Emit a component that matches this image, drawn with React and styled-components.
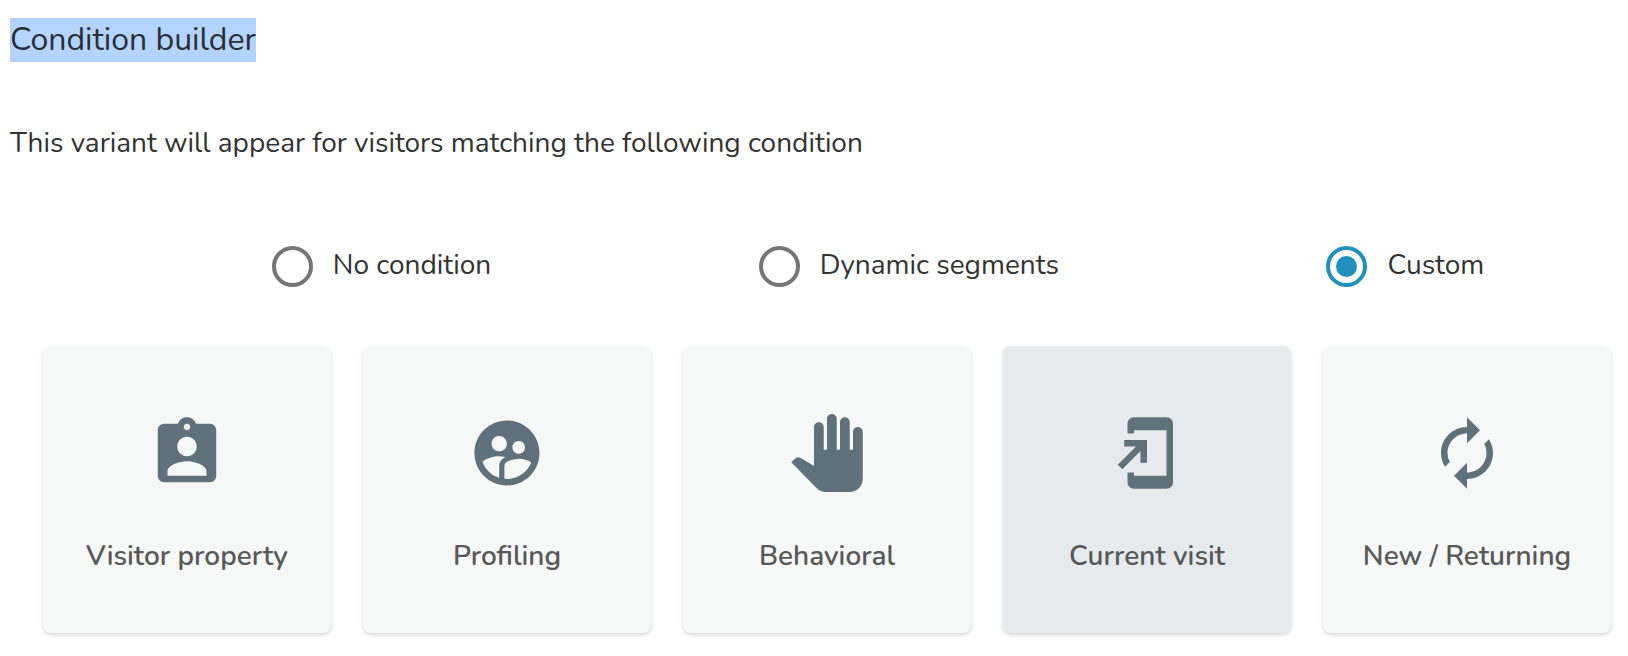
import React, { useState } from "react";
import styled, { createGlobalStyle } from "styled-components";
import {
  MdAddToHomeScreen,
  MdAssignmentInd,
  MdAutorenew,
  MdPanTool,
  MdSupervisedUserCircle,
} from "react-icons/md";

const GlobalStyle = createGlobalStyle`
  *, *::before, *::after {
    box-sizing: border-box;
  }

  body {
    margin: 0;
    background: #ffffff;
    color: #333333;
    font-family: Nunito, "Open Sans", sans-serif;
    font-size: 28px;
    line-height: 38px;
  }
`;

const Page = styled.main`
  padding: 18px 10px 23px;
`;

const Title = styled.h1`
  margin: 0 0 62px;
  font-size: 32px;
  font-weight: 400;
  line-height: 44px;
`;

const Highlight = styled.mark`
  display: inline-block;
  background: #b3d4fe;
  color: #2a2f36;
`;

const Description = styled.p`
  margin: 0 0 84px;
`;

const RadioRow = styled.fieldset`
  display: flex;
  flex-wrap: wrap;
  justify-content: space-around;
  margin: 0 0 59px;
  padding: 0 0 0 128px;
  border: 0;
`;

const RadioLabel = styled.label`
  display: flex;
  align-items: flex-start;
  gap: 20px;
  cursor: pointer;
`;

const RadioInput = styled.input`
  appearance: none;
  display: grid;
  place-items: center;
  flex: none;
  width: 41px;
  height: 41px;
  margin: 0;
  border: 4px solid #757575;
  border-radius: 50%;
  cursor: pointer;

  &:checked {
    border-color: #2190bd;
  }

  &:checked::before {
    content: "";
    width: 21px;
    height: 21px;
    border-radius: 50%;
    background: #2190bd;
  }
`;

const CardGrid = styled.div`
  display: grid;
  grid-template-columns: repeat(5, 1fr);
  gap: 32px;
  padding: 0 7px 0 33px;
`;

const Card = styled.button`
  display: flex;
  flex-direction: column;
  align-items: center;
  gap: 45px;
  padding: 68px 8px 58px;
  border: 0;
  border-radius: 8px;
  background: ${({ $active }) => ($active ? "#e6eaed" : "#f5f8f7")};
  box-shadow: 0 2px 4px rgba(0, 0, 0, 0.16);
  color: #585858;
  font: inherit;
  font-weight: 600;
  cursor: pointer;

  svg {
    width: 78px;
    height: 78px;
    color: #60717b;
  }
`;

const conditionTypes = ["No condition", "Dynamic segments", "Custom"];

const categories = [
  { label: "Visitor property", Icon: MdAssignmentInd },
  { label: "Profiling", Icon: MdSupervisedUserCircle },
  { label: "Behavioral", Icon: MdPanTool },
  { label: "Current visit", Icon: MdAddToHomeScreen },
  { label: "New / Returning", Icon: MdAutorenew },
];

export default function App() {
  const [type, setType] = useState("Custom");
  const [category, setCategory] = useState("Current visit");

  return (
    <>
      <GlobalStyle />
      <Page>
        <Title>
          <Highlight>Condition builder</Highlight>
        </Title>
        <Description>
          This variant will appear for visitors matching the following condition
        </Description>
        <RadioRow>
          {conditionTypes.map((name) => (
            <RadioLabel key={name}>
              <RadioInput
                type="radio"
                name="condition-type"
                checked={type === name}
                onChange={() => setType(name)}
              />
              {name}
            </RadioLabel>
          ))}
        </RadioRow>
        <CardGrid>
          {categories.map(({ label, Icon }) => (
            <Card
              key={label}
              type="button"
              $active={category === label}
              onClick={() => setCategory(label)}
            >
              <Icon aria-hidden="true" />
              {label}
            </Card>
          ))}
        </CardGrid>
      </Page>
    </>
  );
}
